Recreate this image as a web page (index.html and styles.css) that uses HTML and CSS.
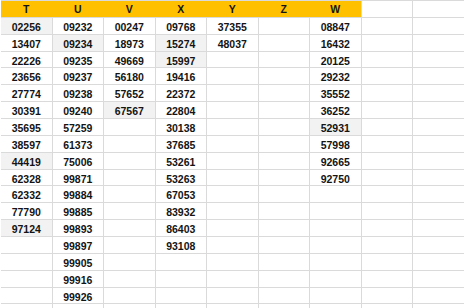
FILE: index.html
```html
<!DOCTYPE html>
<html>
<head>
<meta charset="utf-8">
<link rel="stylesheet" href="styles.css">
</head>
<body>
<div class="sheet">
  <div class="hdr">
    <div class="h">T</div><div class="h">U</div><div class="h">V</div><div class="h">X</div><div class="h">Y</div><div class="h">Z</div><div class="h">W</div>
  </div>
  <div class="c"></div><div class="c"></div>

  <div class="c f">02256</div><div class="c">09232</div><div class="c">00247</div><div class="c">09768</div><div class="c">37355</div><div class="c"></div><div class="c">08847</div><div class="c"></div><div class="c"></div>
  <div class="c">13407</div><div class="c f">09234</div><div class="c">18973</div><div class="c f">15274</div><div class="c">48037</div><div class="c"></div><div class="c">16432</div><div class="c"></div><div class="c"></div>
  <div class="c">22226</div><div class="c">09235</div><div class="c">49669</div><div class="c f">15997</div><div class="c"></div><div class="c"></div><div class="c">20125</div><div class="c"></div><div class="c"></div>
  <div class="c">23656</div><div class="c">09237</div><div class="c">56180</div><div class="c">19416</div><div class="c"></div><div class="c"></div><div class="c">29232</div><div class="c"></div><div class="c"></div>
  <div class="c">27774</div><div class="c">09238</div><div class="c">57652</div><div class="c">22372</div><div class="c"></div><div class="c"></div><div class="c">35552</div><div class="c"></div><div class="c"></div>
  <div class="c">30391</div><div class="c">09240</div><div class="c f">67567</div><div class="c">22804</div><div class="c"></div><div class="c"></div><div class="c">36252</div><div class="c"></div><div class="c"></div>
  <div class="c">35695</div><div class="c">57259</div><div class="c"></div><div class="c">30138</div><div class="c"></div><div class="c"></div><div class="c f">52931</div><div class="c"></div><div class="c"></div>
  <div class="c">38597</div><div class="c">61373</div><div class="c"></div><div class="c">37685</div><div class="c"></div><div class="c"></div><div class="c">57998</div><div class="c"></div><div class="c"></div>
  <div class="c f">44419</div><div class="c">75006</div><div class="c"></div><div class="c">53261</div><div class="c"></div><div class="c"></div><div class="c">92665</div><div class="c"></div><div class="c"></div>
  <div class="c">62328</div><div class="c">99871</div><div class="c"></div><div class="c">53263</div><div class="c"></div><div class="c"></div><div class="c">92750</div><div class="c"></div><div class="c"></div>
  <div class="c">62332</div><div class="c">99884</div><div class="c"></div><div class="c">67053</div><div class="c"></div><div class="c"></div><div class="c"></div><div class="c"></div><div class="c"></div>
  <div class="c">77790</div><div class="c">99885</div><div class="c"></div><div class="c">83932</div><div class="c"></div><div class="c"></div><div class="c"></div><div class="c"></div><div class="c"></div>
  <div class="c f">97124</div><div class="c">99893</div><div class="c"></div><div class="c">86403</div><div class="c"></div><div class="c"></div><div class="c"></div><div class="c"></div><div class="c"></div>
  <div class="c"></div><div class="c">99897</div><div class="c"></div><div class="c">93108</div><div class="c"></div><div class="c"></div><div class="c"></div><div class="c"></div><div class="c"></div>
  <div class="c"></div><div class="c">99905</div><div class="c"></div><div class="c"></div><div class="c"></div><div class="c"></div><div class="c"></div><div class="c"></div><div class="c"></div>
  <div class="c"></div><div class="c">99916</div><div class="c"></div><div class="c"></div><div class="c"></div><div class="c"></div><div class="c"></div><div class="c"></div><div class="c"></div>
  <div class="c"></div><div class="c">99926</div><div class="c"></div><div class="c"></div><div class="c"></div><div class="c"></div><div class="c"></div><div class="c"></div><div class="c"></div>
  <div class="c"></div><div class="c"></div><div class="c"></div><div class="c"></div><div class="c"></div><div class="c"></div><div class="c"></div><div class="c"></div><div class="c"></div>
</div>
</body>
</html>
```

FILE: styles.css
```css
html, body {
  margin: 0;
  padding: 0;
  background: #ffffff;
  overflow: hidden;
}

.sheet {
  display: grid;
  grid-template-columns: repeat(9, 50.5px);
  grid-auto-rows: 15.87px;
  column-gap: 1px;
  row-gap: 1px;
  padding: 1px 0 0 0;
  margin-left: 1px;
  width: max-content;
  background: #dadada;
  font-family: "Liberation Sans", Arial, sans-serif;
  font-weight: bold;
  font-size: 10.5px;
  color: #141414;
}

.hdr {
  grid-column: span 7;
  display: grid;
  grid-template-columns: repeat(7, 50.5px);
  column-gap: 1px;
  background: #ffc000;
}

.h {
  text-align: center;
  line-height: 14px;
  padding-top: 1px;
}

.c {
  background: #ffffff;
  text-align: center;
  line-height: 14px;
  padding-top: 2px;
  overflow: hidden;
}

.c.f {
  background: #f2f2f2;
}
```
